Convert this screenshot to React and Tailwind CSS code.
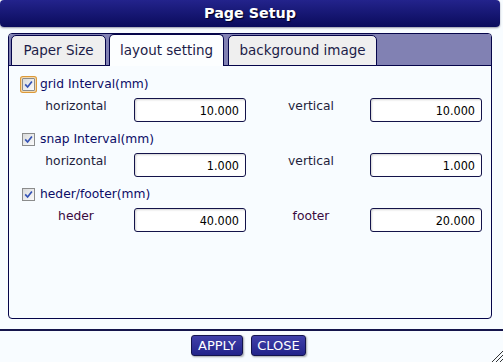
import React from "react";

const tabs = [
  { name: "Paper Size", w: "w-[95px] ml-[2px]", active: false },
  { name: "layout setting", w: "w-[115px] ml-[3px]", active: true },
  { name: "background image", w: "w-[149px] ml-[4px]", active: false },
];

function Check({ focus }) {
  return (
    <span
      className={
        "w-[13px] h-[13px] border border-[#8b8c8c] bg-linear-to-br from-[#d9dadb] to-[#fbfbfb] flex items-center justify-center shrink-0 " +
        (focus ? "shadow-[0_0_0_1px_#f3d9ae,0_0_0_2px_#dc9a3a] rounded-[1px]" : "")
      }
    >
      <svg width="9" height="9" viewBox="0 0 9 9">
        <path d="M1.2 4.4 L3.6 7 L7.9 1.4" stroke="#3553b5" strokeWidth="1.7" fill="none" />
      </svg>
    </span>
  );
}

function Field({ value, className = "" }) {
  return (
    <input
      readOnly
      value={value}
      className={
        "w-[112px] h-[24px] border border-[#13134a] rounded-[3px] bg-white text-right pr-[6px] text-[12.5px] text-black shadow-[inset_1px_1px_2px_rgba(0,0,0,0.18)] font-['DejaVu_Sans_Condensed','Open_Sans',sans-serif] outline-none " +
        className
      }
    />
  );
}

function Header({ text, focus, className = "" }) {
  return (
    <div className={"flex items-center h-[16px] pl-[2px] gap-[5px] " + className}>
      <Check focus={focus} />
      <span className="text-[12.3px] text-[#0c0c66] leading-none">{text}</span>
    </div>
  );
}

function Row({ l1, v1, l2, v2, color, className = "" }) {
  return (
    <div className={"flex items-center h-[24px] " + className}>
      <div className={"w-[112px] text-center mb-2 text-[12.3px] " + color}>{l1}</div>
      <Field value={v1} className="ml-[2px]" />
      <div className={"w-[118px] ml-[6px] text-center mb-2 text-[12.3px] " + color}>{l2}</div>
      <Field value={v2} />
    </div>
  );
}

export default function App() {
  return (
    <div className="w-[503px] h-[362px] bg-[#f8fcff] relative flex flex-col overflow-hidden font-['DejaVu_Sans',sans-serif]">
      {/* title bar */}
      <div className="h-[27px] mr-[3px] rounded-[4px] bg-linear-to-b from-[#23238c] to-[#0b0b5c] shadow-[0_1px_2px_rgba(0,0,40,0.4)] flex items-center justify-center">
        <span className="text-white font-bold text-[14.3px] [text-shadow:1px_1px_1px_#000020]">Page Setup</span>
      </div>

      {/* tab panel */}
      <div className="mt-[6px] ml-[8px] w-[484px] h-[286px] border border-[#05054a] rounded-[4px] flex flex-col overflow-hidden">
        <div className="h-[32px] bg-[#8181b3] border-b border-[#05054a] flex items-end">
          {tabs.map((t) => (
            <div
              key={t.name}
              className={
                "relative -mb-px flex items-center justify-center rounded-t-[5px] border border-[#05054a] text-[13.5px] text-[#1c1c48] " +
                t.w +
                (t.active ? " h-[32px] bg-[#fcfeff] border-b-0 pb-px" : " h-[31px] bg-[#efefef]")
              }
            >
              {t.name}
            </div>
          ))}
        </div>

        <div className="flex-1 pt-[10px] pl-[11px]">
          <Header text="grid Interval(mm)" focus />
          <Row className="mt-[6px]" l1="horizontal" v1="10.000" l2="vertical" v2="10.000" color="text-[#1e1e3c]" />
          <Header className="mt-[9px]" text="snap Interval(mm)" />
          <Row className="mt-[6px]" l1="horizontal" v1="1.000" l2="vertical" v2="1.000" color="text-[#1e1e3c]" />
          <Header className="mt-[9px]" text="heder/footer(mm)" />
          <Row className="mt-[6px]" l1="heder" v1="40.000" l2="footer" v2="20.000" color="text-[#3a0a40]" />
        </div>
      </div>

      {/* separator */}
      <div className="mt-[10px] h-[2px] bg-[#15154c]" />

      {/* buttons */}
      <div className="mt-[4px] flex justify-center gap-[8px] pr-[6px]">
        <button className="w-[52px] h-[21px] border border-[#14144e] rounded-[3px] bg-linear-to-b from-[#4040aa] to-[#24248a] text-white text-[13px] shadow-[1px_1px_2px_rgba(0,0,0,0.35)]">
          APPLY
        </button>
        <button className="w-[55px] h-[21px] border border-[#14144e] rounded-[3px] bg-linear-to-b from-[#4040aa] to-[#24248a] text-white text-[13px] shadow-[1px_1px_2px_rgba(0,0,0,0.35)]">
          CLOSE
        </button>
      </div>

      {/* resize grip */}
      <svg className="absolute right-0 bottom-0" width="12" height="12" viewBox="0 0 12 12">
        <path d="M12 1 L1 12 M12 5 L5 12 M12 9 L9 12" stroke="#333" strokeWidth="1" />
      </svg>
    </div>
  );
}
